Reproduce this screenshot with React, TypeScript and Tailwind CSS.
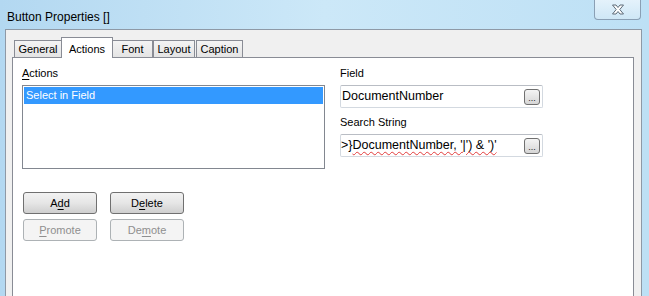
import React from "react";

const font = { fontFamily: '"Liberation Sans", Arial, sans-serif' };

function Tab({
  label,
  selected,
  className,
}: {
  label: string;
  selected?: boolean;
  className: string;
}) {
  if (selected) {
    return (
      <div
        className={`relative z-10 -mb-px flex h-[21px] items-start justify-center border border-b-0 border-[#898c95] bg-white pt-[3px] text-[11px] text-black ${className}`}
      >
        {label}
      </div>
    );
  }
  return (
    <div
      className={`flex h-[17px] items-center justify-center border border-b-0 border-[#898c95] bg-gradient-to-b from-[#f4f4f4] to-[#e4e4e4] text-[11px] text-black ${className}`}
    >
      {label}
    </div>
  );
}

function Btn({
  children,
  disabled,
}: {
  children: React.ReactNode;
  disabled?: boolean;
}) {
  if (disabled) {
    return (
      <div className="flex h-[22px] w-[74px] items-center justify-center rounded-[3px] border border-[#adb2b5] bg-[#f4f4f4] text-[11px] text-[#8f8f8f]">
        {children}
      </div>
    );
  }
  return (
    <div className="flex h-[22px] w-[74px] items-center justify-center rounded-[3px] border border-[#707070] bg-gradient-to-b from-[#f2f2f2] via-[#e6e6e6] to-[#cfcfcf] text-[11px] text-black">
      {children}
    </div>
  );
}

function Dots() {
  return (
    <div className="flex h-[16px] w-[16px] items-end justify-center rounded-[3px] border border-[#707070] bg-gradient-to-b from-[#f4f4f4] to-[#d6d6d6] pb-[1px] text-[9px] leading-[9px] text-[#222]">
      ...
    </div>
  );
}

export default function App() {
  return (
    <div
      className="flex h-[296px] w-[649px] flex-col overflow-hidden bg-gradient-to-r from-[#b3d8f1] via-[#cce8f8] to-[#bde0f5]"
      style={font}
    >
      {/* title bar */}
      <div className="flex h-[29px] shrink-0 items-start justify-between">
        <div className="pl-[7px] pt-[8px] text-[12px] text-black">
          Button Properties []
        </div>
        <div className="mr-[8px] flex h-[20px] w-[47px] items-center justify-center rounded-b-[4px] border border-t-0 border-[#8a9fb4] bg-gradient-to-b from-[#e4f2fb] to-[#cfe7f6]">
          <svg width="14" height="11" viewBox="0 0 14 11">
            <path
              d="M1.5 1 H5 L7 3.5 L9 1 H12.5 L8.8 5.5 L12.5 10 H9 L7 7.5 L5 10 H1.5 L5.2 5.5 Z"
              fill="#ffffff"
              stroke="#5d6b78"
              strokeWidth="1"
              strokeLinejoin="round"
            />
          </svg>
        </div>
      </div>

      {/* dialog body */}
      <div className="ml-[5px] mr-[7px] flex h-[300px] shrink-0 flex-col border border-[#8e99a6] bg-[#f0f0f0]">
        {/* tabs */}
        <div className="flex h-[20px] items-end pl-[8px] pt-0 mt-[7px]">
          <Tab label="General" className="w-[48px]" />
          <Tab label="Actions" selected className="-ml-px w-[52px]" />
          <Tab label="Font" className="-ml-px w-[41px]" />
          <Tab label="Layout" className="ml-0 w-[42px]" />
          <Tab label="Caption" className="ml-px w-[47px]" />
        </div>

        {/* panel */}
        <div className="ml-[6px] mr-[7px] flex flex-1 border border-[#898c95] bg-white pl-[9px] pt-[8px] text-[11px] text-black">
          {/* left column */}
          <div className="flex w-[303px] flex-col">
            <div className="h-[14px] leading-[14px]">
              <u className="underline-offset-[2px]">A</u>ctions
            </div>
            <div className="mt-[5px] h-[84px] border border-[#828790] bg-white p-px">
              <div className="flex h-[17px] items-center bg-[#3399ff] pl-[2px] text-white">
                Select in Field
              </div>
            </div>
            <div className="ml-px mt-[23px] flex gap-[13px]">
              <Btn>
                A<u className="underline-offset-[2px]">d</u>d
              </Btn>
              <Btn>
                D<u className="underline-offset-[2px]">e</u>lete
              </Btn>
            </div>
            <div className="ml-px mt-[5px] flex gap-[13px]">
              <Btn disabled>
                <u className="underline-offset-[2px]">P</u>romote
              </Btn>
              <Btn disabled>
                De<u className="underline-offset-[2px]">m</u>ote
              </Btn>
            </div>
          </div>

          {/* right column */}
          <div className="ml-[15px] flex w-[203px] flex-col">
            <div className="h-[14px] leading-[14px]">Field</div>
            <div className="mt-[5px] flex h-[23px] items-center justify-between rounded-[2px] border border-[#d3d9e0] border-t-[#b9bdc4] pl-px pr-[2px]">
              <span className="text-[12.5px]">DocumentNumber</span>
              <Dots />
            </div>
            <div className="mt-[7px] h-[14px] leading-[14px]">Search String</div>
            <div className="mt-[5px] flex h-[23px] items-center justify-between rounded-[2px] border border-[#d3d9e0] border-t-[#b9bdc4] pr-[2px]">
              <span className="whitespace-pre text-[12.5px]">
                {">}"}
                <span className="underline decoration-[#e23b3b] decoration-wavy decoration-1 underline-offset-[2px]">
                  DocumentNumber, '|') &amp; ')'
                </span>
              </span>
              <Dots />
            </div>
          </div>
        </div>
      </div>
    </div>
  );
}
